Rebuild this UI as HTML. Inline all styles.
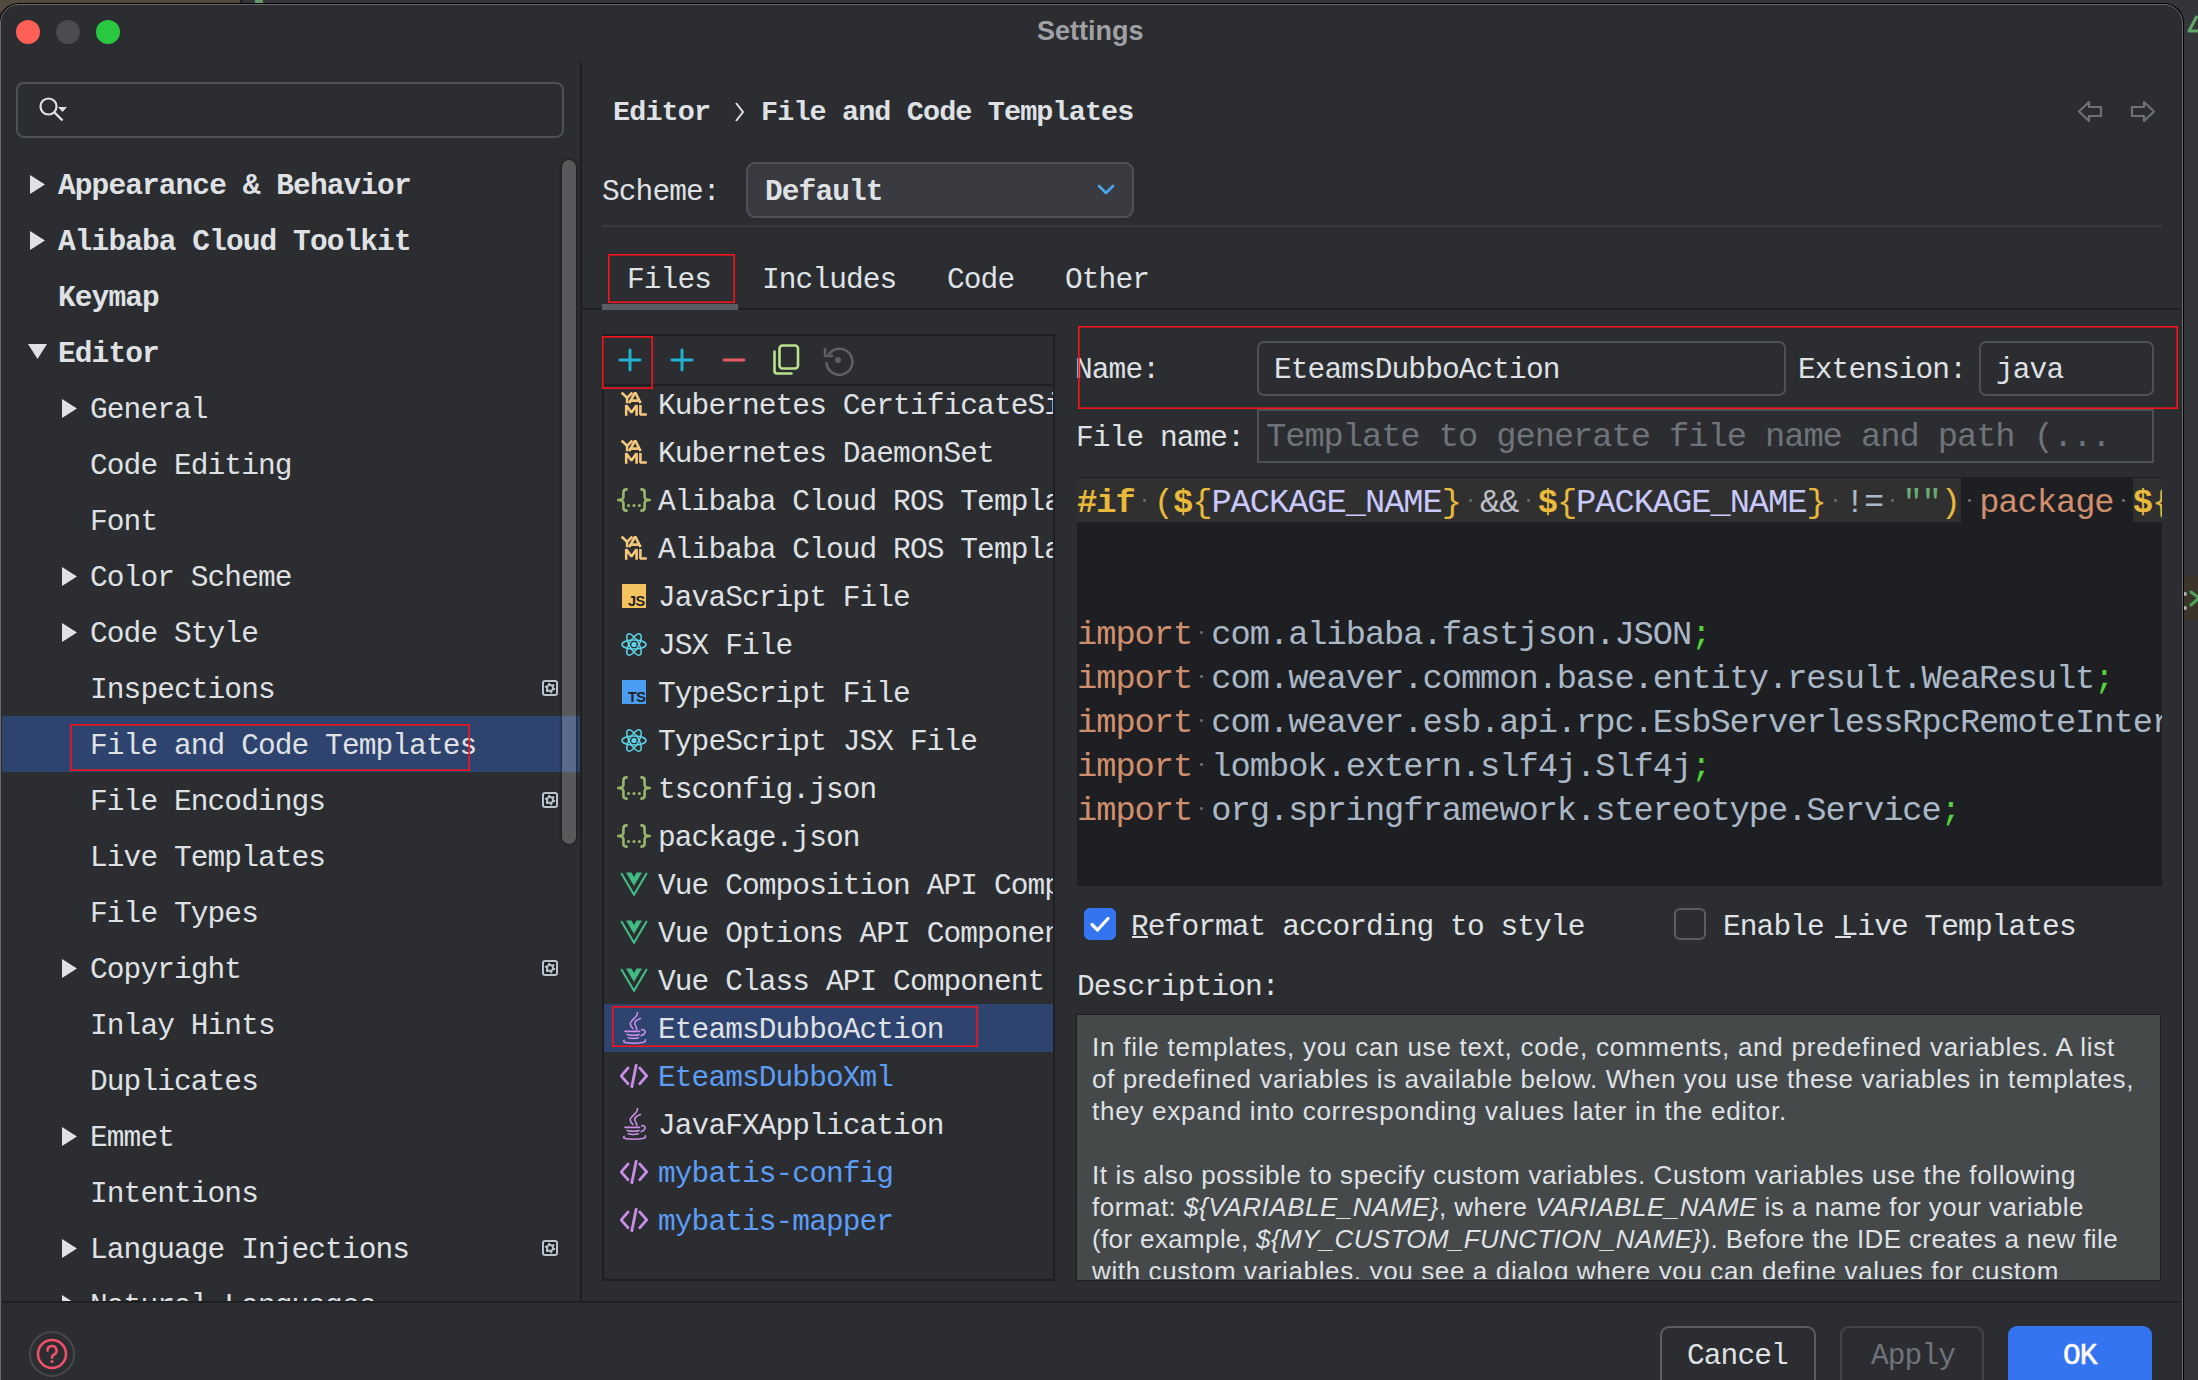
<!DOCTYPE html><html><head><meta charset="utf-8"><style>html,body{margin:0;padding:0;width:2198px;height:1380px;overflow:hidden;background:#303134}</style></head><body><div style="position:absolute;left:0px;top:0px;width:2198px;height:1380px;background:#343538"></div>
<div style="position:absolute;left:0px;top:0px;width:240px;height:12px;background:#524a3e"></div>
<div style="position:absolute;left:240px;top:0px;width:2px;height:4px;background:#1e1f22"></div>
<div style="position:absolute;left:255px;top:0px;width:8px;height:4px;background:#5f9b6a"></div>
<svg style="position:absolute;left:2186px;top:14px;" width="14" height="22" viewBox="0 0 14 22"><path d="M11 2 L3 17 H14" fill="none" stroke="#5fa86a" stroke-width="3" stroke-linejoin="round"/></svg>
<div style="position:absolute;left:2183px;top:576px;width:15px;height:44px;background:#3b3429"></div>
<div style="position:absolute;left:2183px;top:592px;width:4px;height:4px;background:#b0b0b0;border-radius:2px"></div>
<div style="position:absolute;left:2183px;top:606px;width:4px;height:4px;background:#b0b0b0;border-radius:2px"></div>
<svg style="position:absolute;left:2189px;top:588px;" width="10" height="22" viewBox="0 0 10 22"><path d="M2 4 L10 10 L2 17" fill="none" stroke="#4fa45a" stroke-width="3" stroke-linecap="round"/></svg>
<div style="position:absolute;left:-1px;top:3px;width:2185px;height:1420px;background:#000;border-radius:20px 20px 0 0"></div>
<div style="position:absolute;left:0px;top:4px;width:2183px;height:1420px;background:#2b2d30;border:1.5px solid #6a6b6e;border-radius:19px 19px 0 0;box-sizing:border-box;"></div>
<div style="position:absolute;left:16px;top:20px;width:24px;height:24px;background:#fe5f57;border-radius:50%"></div>
<div style="position:absolute;left:56px;top:20px;width:24px;height:24px;background:#4b4c4f;border-radius:50%"></div>
<div style="position:absolute;left:96px;top:20px;width:24px;height:24px;background:#28c840;border-radius:50%"></div>
<div style="position:absolute;left:1037px;top:16px;font-family:'Liberation Sans', sans-serif;font-size:27px;line-height:normal;color:#a0a1a5;font-weight:bold;white-space:pre;">Settings</div>
<div style="position:absolute;left:16px;top:82px;width:548px;height:56px;border:2px solid #4e5157;border-radius:8px;box-sizing:border-box"></div>
<svg style="position:absolute;left:36px;top:94px;" width="36" height="30" viewBox="0 0 36 30"><circle cx="12.5" cy="12.5" r="8" fill="none" stroke="#dfe1e5" stroke-width="2.2"/><line x1="18.5" y1="18.5" x2="26.5" y2="26.5" stroke="#dfe1e5" stroke-width="2.4"/><path d="M22 13 L31 13 L26.5 18 Z" fill="#dfe1e5"/></svg>
<div style="position:absolute;left:0;top:150px;width:580px;height:1152px;overflow:hidden">
<div style="position:absolute;left:2px;top:566px;width:561px;height:56px;background:#2e436e"></div>
<div style="position:absolute;left:563px;top:566px;width:17px;height:56px;background:#2e436e"></div>
<svg style="position:absolute;left:30px;top:25px;" width="16" height="19" viewBox="0 0 16 19"><path d="M0 0 L15 9.5 L0 19 Z" fill="#dfe1e5"/></svg>
<div style="position:absolute;left:58px;top:19px;font-family:'Liberation Mono', monospace;font-size:29.51px;line-height:normal;color:#dfe1e5;font-weight:bold;white-space:pre;letter-spacing:-0.909px;">Appearance &amp; Behavior</div>
<svg style="position:absolute;left:30px;top:81px;" width="16" height="19" viewBox="0 0 16 19"><path d="M0 0 L15 9.5 L0 19 Z" fill="#dfe1e5"/></svg>
<div style="position:absolute;left:58px;top:75px;font-family:'Liberation Mono', monospace;font-size:29.51px;line-height:normal;color:#dfe1e5;font-weight:bold;white-space:pre;letter-spacing:-0.909px;">Alibaba Cloud Toolkit</div>
<div style="position:absolute;left:58px;top:131px;font-family:'Liberation Mono', monospace;font-size:29.51px;line-height:normal;color:#dfe1e5;font-weight:bold;white-space:pre;letter-spacing:-0.909px;">Keymap</div>
<svg style="position:absolute;left:28px;top:194px;" width="19" height="16" viewBox="0 0 19 16"><path d="M0 0 L19 0 L9.5 15 Z" fill="#dfe1e5"/></svg>
<div style="position:absolute;left:58px;top:187px;font-family:'Liberation Mono', monospace;font-size:29.51px;line-height:normal;color:#dfe1e5;font-weight:bold;white-space:pre;letter-spacing:-0.909px;">Editor</div>
<svg style="position:absolute;left:62px;top:249px;" width="16" height="19" viewBox="0 0 16 19"><path d="M0 0 L15 9.5 L0 19 Z" fill="#dfe1e5"/></svg>
<div style="position:absolute;left:90px;top:243px;font-family:'Liberation Mono', monospace;font-size:29.51px;line-height:normal;color:#dfe1e5;font-weight:normal;white-space:pre;letter-spacing:-0.909px;">General</div>
<div style="position:absolute;left:90px;top:299px;font-family:'Liberation Mono', monospace;font-size:29.51px;line-height:normal;color:#dfe1e5;font-weight:normal;white-space:pre;letter-spacing:-0.909px;">Code Editing</div>
<div style="position:absolute;left:90px;top:355px;font-family:'Liberation Mono', monospace;font-size:29.51px;line-height:normal;color:#dfe1e5;font-weight:normal;white-space:pre;letter-spacing:-0.909px;">Font</div>
<svg style="position:absolute;left:62px;top:417px;" width="16" height="19" viewBox="0 0 16 19"><path d="M0 0 L15 9.5 L0 19 Z" fill="#dfe1e5"/></svg>
<div style="position:absolute;left:90px;top:411px;font-family:'Liberation Mono', monospace;font-size:29.51px;line-height:normal;color:#dfe1e5;font-weight:normal;white-space:pre;letter-spacing:-0.909px;">Color Scheme</div>
<svg style="position:absolute;left:62px;top:473px;" width="16" height="19" viewBox="0 0 16 19"><path d="M0 0 L15 9.5 L0 19 Z" fill="#dfe1e5"/></svg>
<div style="position:absolute;left:90px;top:467px;font-family:'Liberation Mono', monospace;font-size:29.51px;line-height:normal;color:#dfe1e5;font-weight:normal;white-space:pre;letter-spacing:-0.909px;">Code Style</div>
<div style="position:absolute;left:90px;top:523px;font-family:'Liberation Mono', monospace;font-size:29.51px;line-height:normal;color:#dfe1e5;font-weight:normal;white-space:pre;letter-spacing:-0.909px;">Inspections</div>
<svg style="position:absolute;left:541px;top:529px;" width="18" height="18" viewBox="0 0 18 18"><rect x="2" y="2" width="14" height="14" rx="2" fill="#1e1f22" stroke="#b9c4cc" stroke-width="2"/><circle cx="9" cy="9" r="3" fill="none" stroke="#b9c4cc" stroke-width="2"/><circle cx="9" cy="9" r="4.4" fill="none" stroke="#b9c4cc" stroke-width="1.8" stroke-dasharray="1.9 2.7"/></svg>
<div style="position:absolute;left:90px;top:579px;font-family:'Liberation Mono', monospace;font-size:29.51px;line-height:normal;color:#dfe1e5;font-weight:normal;white-space:pre;letter-spacing:-0.909px;">File and Code Templates</div>
<div style="position:absolute;left:90px;top:635px;font-family:'Liberation Mono', monospace;font-size:29.51px;line-height:normal;color:#dfe1e5;font-weight:normal;white-space:pre;letter-spacing:-0.909px;">File Encodings</div>
<svg style="position:absolute;left:541px;top:641px;" width="18" height="18" viewBox="0 0 18 18"><rect x="2" y="2" width="14" height="14" rx="2" fill="#1e1f22" stroke="#b9c4cc" stroke-width="2"/><circle cx="9" cy="9" r="3" fill="none" stroke="#b9c4cc" stroke-width="2"/><circle cx="9" cy="9" r="4.4" fill="none" stroke="#b9c4cc" stroke-width="1.8" stroke-dasharray="1.9 2.7"/></svg>
<div style="position:absolute;left:90px;top:691px;font-family:'Liberation Mono', monospace;font-size:29.51px;line-height:normal;color:#dfe1e5;font-weight:normal;white-space:pre;letter-spacing:-0.909px;">Live Templates</div>
<div style="position:absolute;left:90px;top:747px;font-family:'Liberation Mono', monospace;font-size:29.51px;line-height:normal;color:#dfe1e5;font-weight:normal;white-space:pre;letter-spacing:-0.909px;">File Types</div>
<svg style="position:absolute;left:62px;top:809px;" width="16" height="19" viewBox="0 0 16 19"><path d="M0 0 L15 9.5 L0 19 Z" fill="#dfe1e5"/></svg>
<div style="position:absolute;left:90px;top:803px;font-family:'Liberation Mono', monospace;font-size:29.51px;line-height:normal;color:#dfe1e5;font-weight:normal;white-space:pre;letter-spacing:-0.909px;">Copyright</div>
<svg style="position:absolute;left:541px;top:809px;" width="18" height="18" viewBox="0 0 18 18"><rect x="2" y="2" width="14" height="14" rx="2" fill="#1e1f22" stroke="#b9c4cc" stroke-width="2"/><circle cx="9" cy="9" r="3" fill="none" stroke="#b9c4cc" stroke-width="2"/><circle cx="9" cy="9" r="4.4" fill="none" stroke="#b9c4cc" stroke-width="1.8" stroke-dasharray="1.9 2.7"/></svg>
<div style="position:absolute;left:90px;top:859px;font-family:'Liberation Mono', monospace;font-size:29.51px;line-height:normal;color:#dfe1e5;font-weight:normal;white-space:pre;letter-spacing:-0.909px;">Inlay Hints</div>
<div style="position:absolute;left:90px;top:915px;font-family:'Liberation Mono', monospace;font-size:29.51px;line-height:normal;color:#dfe1e5;font-weight:normal;white-space:pre;letter-spacing:-0.909px;">Duplicates</div>
<svg style="position:absolute;left:62px;top:977px;" width="16" height="19" viewBox="0 0 16 19"><path d="M0 0 L15 9.5 L0 19 Z" fill="#dfe1e5"/></svg>
<div style="position:absolute;left:90px;top:971px;font-family:'Liberation Mono', monospace;font-size:29.51px;line-height:normal;color:#dfe1e5;font-weight:normal;white-space:pre;letter-spacing:-0.909px;">Emmet</div>
<div style="position:absolute;left:90px;top:1027px;font-family:'Liberation Mono', monospace;font-size:29.51px;line-height:normal;color:#dfe1e5;font-weight:normal;white-space:pre;letter-spacing:-0.909px;">Intentions</div>
<svg style="position:absolute;left:62px;top:1089px;" width="16" height="19" viewBox="0 0 16 19"><path d="M0 0 L15 9.5 L0 19 Z" fill="#dfe1e5"/></svg>
<div style="position:absolute;left:90px;top:1083px;font-family:'Liberation Mono', monospace;font-size:29.51px;line-height:normal;color:#dfe1e5;font-weight:normal;white-space:pre;letter-spacing:-0.909px;">Language Injections</div>
<svg style="position:absolute;left:541px;top:1089px;" width="18" height="18" viewBox="0 0 18 18"><rect x="2" y="2" width="14" height="14" rx="2" fill="#1e1f22" stroke="#b9c4cc" stroke-width="2"/><circle cx="9" cy="9" r="3" fill="none" stroke="#b9c4cc" stroke-width="2"/><circle cx="9" cy="9" r="4.4" fill="none" stroke="#b9c4cc" stroke-width="1.8" stroke-dasharray="1.9 2.7"/></svg>
<svg style="position:absolute;left:62px;top:1145px;" width="16" height="19" viewBox="0 0 16 19"><path d="M0 0 L15 9.5 L0 19 Z" fill="#dfe1e5"/></svg>
<div style="position:absolute;left:90px;top:1139px;font-family:'Liberation Mono', monospace;font-size:29.51px;line-height:normal;color:#dfe1e5;font-weight:normal;white-space:pre;letter-spacing:-0.909px;">Natural Languages</div>
<div style="position:absolute;left:562px;top:10px;width:14px;height:684px;background:rgba(255,255,255,0.21);border-radius:7px;box-shadow:0 0 2px 1px rgba(20,20,22,0.6)"></div>
</div>
<svg style="position:absolute;left:70px;top:724px" width="400" height="47"><rect x="0.8" y="0.8" width="398.4" height="45.4" fill="none" stroke="#f5141c" stroke-width="1.6"/></svg>
<div style="position:absolute;left:580px;top:62px;width:2px;height:1240px;background:#1e1f22"></div>
<div style="position:absolute;left:2px;top:1301px;width:2178px;height:2px;background:#1e1f22"></div>
<svg style="position:absolute;left:28px;top:1330px;" width="48" height="48" viewBox="0 0 48 48"><circle cx="24" cy="24" r="22" fill="none" stroke="#45474b" stroke-width="2"/><circle cx="24" cy="24" r="14" fill="none" stroke="#f2506d" stroke-width="2.6"/><path d="M19.5 20.5 a4.5 4.5 0 1 1 6.5 4 c-1.5 .8 -2 1.6 -2 3.2" fill="none" stroke="#f2506d" stroke-width="2.6" stroke-linecap="round"/><circle cx="24" cy="31.5" r="1.6" fill="#f2506d"/></svg>
<div style="position:absolute;left:613px;top:96px;font-family:'Liberation Mono', monospace;font-size:28.46px;line-height:normal;color:#dfe1e5;font-weight:bold;white-space:pre;letter-spacing:-0.879px;">Editor</div>
<svg style="position:absolute;left:733px;top:101px;" width="14" height="22" viewBox="0 0 14 22"><path d="M3 2 L10 11 L3 20" fill="none" stroke="#dfe1e5" stroke-width="2"/></svg>
<div style="position:absolute;left:761px;top:96px;font-family:'Liberation Mono', monospace;font-size:28.46px;line-height:normal;color:#dfe1e5;font-weight:bold;white-space:pre;letter-spacing:-0.879px;">File and Code Templates</div>
<svg style="position:absolute;left:2076px;top:99px;" width="30" height="26" viewBox="0 0 30 26"><path d="M3 12.5 L13 3 L13 8 L25 8 L25 17 L13 17 L13 22 Z" fill="none" stroke="#6e7175" stroke-width="2.2" stroke-linejoin="round"/></svg>
<svg style="position:absolute;left:2127px;top:99px;" width="30" height="26" viewBox="0 0 30 26"><path d="M27 12.5 L17 3 L17 8 L5 8 L5 17 L17 17 L17 22 Z" fill="none" stroke="#6e7175" stroke-width="2.2" stroke-linejoin="round"/></svg>
<div style="position:absolute;left:602px;top:175px;font-family:'Liberation Mono', monospace;font-size:29.51px;line-height:normal;color:#dfe1e5;font-weight:normal;white-space:pre;letter-spacing:-0.909px;">Scheme:</div>
<div style="position:absolute;left:746px;top:162px;width:388px;height:56px;background:#393b40;border:2px solid #4e5157;border-radius:9px;box-sizing:border-box"></div>
<div style="position:absolute;left:765px;top:175px;font-family:'Liberation Mono', monospace;font-size:29.51px;line-height:normal;color:#dfe1e5;font-weight:bold;white-space:pre;letter-spacing:-0.909px;">Default</div>
<svg style="position:absolute;left:1096px;top:182px;" width="20" height="16" viewBox="0 0 20 16"><path d="M3 4 L10 11 L17 4" fill="none" stroke="#4ca6e8" stroke-width="2.6" stroke-linecap="round" stroke-linejoin="round"/></svg>
<div style="position:absolute;left:602px;top:225px;width:1560px;height:2px;background:#393b40"></div>
<div style="position:absolute;left:627px;top:263px;font-family:'Liberation Mono', monospace;font-size:29.51px;line-height:normal;color:#dfe1e5;font-weight:normal;white-space:pre;letter-spacing:-0.909px;">Files</div>
<div style="position:absolute;left:762px;top:263px;font-family:'Liberation Mono', monospace;font-size:29.51px;line-height:normal;color:#dfe1e5;font-weight:normal;white-space:pre;letter-spacing:-0.909px;">Includes</div>
<div style="position:absolute;left:947px;top:263px;font-family:'Liberation Mono', monospace;font-size:29.51px;line-height:normal;color:#dfe1e5;font-weight:normal;white-space:pre;letter-spacing:-0.909px;">Code</div>
<div style="position:absolute;left:1065px;top:263px;font-family:'Liberation Mono', monospace;font-size:29.51px;line-height:normal;color:#dfe1e5;font-weight:normal;white-space:pre;letter-spacing:-0.909px;">Other</div>
<div style="position:absolute;left:582px;top:308px;width:1598px;height:2px;background:#1e1f22"></div>
<div style="position:absolute;left:602px;top:304px;width:136px;height:6px;background:#5a5d63"></div>
<svg style="position:absolute;left:608px;top:254px" width="127" height="49"><rect x="0.8" y="0.8" width="125.4" height="47.4" fill="none" stroke="#f5141c" stroke-width="1.6"/></svg>
<div style="position:absolute;left:602px;top:334px;width:453px;height:947px;border:2px solid #1e1f22;box-sizing:border-box"></div>
<div style="position:absolute;left:604px;top:384px;width:449px;height:2px;background:#1e1f22"></div>
<svg style="position:absolute;left:618px;top:348px;" width="24" height="24" viewBox="0 0 24 24"><path d="M12 2 V22 M2 12 H22" stroke="#1fb4d2" stroke-width="2.9" stroke-linecap="round"/></svg>
<svg style="position:absolute;left:670px;top:348px;" width="24" height="24" viewBox="0 0 24 24"><path d="M12 2 V22 M2 12 H22" stroke="#1fb4d2" stroke-width="2.9" stroke-linecap="round"/></svg>
<svg style="position:absolute;left:722px;top:348px;" width="24" height="24" viewBox="0 0 24 24"><path d="M2 12 H22" stroke="#e65a62" stroke-width="2.8" stroke-linecap="round"/></svg>
<svg style="position:absolute;left:770px;top:342px;" width="32" height="36" viewBox="0 0 32 36"><rect x="9.5" y="3.5" width="18.5" height="23" rx="3" fill="none" stroke="#b9e28a" stroke-width="2.6"/><path d="M4.5 9.5 V29 Q4.5 31.5 7 31.5 H21.5" fill="none" stroke="#b9e28a" stroke-width="2.6" stroke-linecap="round"/></svg>
<svg style="position:absolute;left:822px;top:344px;" width="32" height="32" viewBox="0 0 32 32"><path d="M7 10 A13 13 0 1 1 4.5 19" fill="none" stroke="#5e6064" stroke-width="2.6" stroke-linecap="round"/><path d="M3 5 V12 H10" fill="none" stroke="#5e6064" stroke-width="2.6" stroke-linecap="round" stroke-linejoin="round"/><circle cx="16" cy="16" r="3" fill="#5e6064"/></svg>
<svg style="position:absolute;left:602px;top:336px" width="51" height="53"><rect x="0.8" y="0.8" width="49.4" height="51.4" fill="none" stroke="#f5141c" stroke-width="1.6"/></svg>
<div style="position:absolute;left:604px;top:386px;width:449px;height:893px;overflow:hidden">
<div style="position:absolute;left:0px;top:618px;width:449px;height:48px;background:#2e436e"></div>
<svg style="position:absolute;left:16px;top:6px;" width="28" height="26" viewBox="0 0 28 26"><g fill="none" stroke="#f5c77c" stroke-width="2.6" stroke-linejoin="bevel"><path d="M1.6 0.6 L7.1 5.8 L12.3 0.6 M7.1 5.8 V11.2"/><path d="M9.2 11.2 L15.2 0.4 L20.6 11.2 M11.4 8.6 H18.8"/><path d="M6.2 23.8 V13.2 L11.4 20.4 L16.6 13.2 V23.8"/><path d="M20.4 13 V22.5 H26.8"/></g></svg>
<div style="position:absolute;left:54px;top:3px;font-family:'Liberation Mono', monospace;font-size:29.51px;line-height:normal;color:#dfe1e5;font-weight:normal;white-space:pre;letter-spacing:-0.909px;">Kubernetes CertificateSigningRequest</div>
<svg style="position:absolute;left:16px;top:54px;" width="28" height="26" viewBox="0 0 28 26"><g fill="none" stroke="#f5c77c" stroke-width="2.6" stroke-linejoin="bevel"><path d="M1.6 0.6 L7.1 5.8 L12.3 0.6 M7.1 5.8 V11.2"/><path d="M9.2 11.2 L15.2 0.4 L20.6 11.2 M11.4 8.6 H18.8"/><path d="M6.2 23.8 V13.2 L11.4 20.4 L16.6 13.2 V23.8"/><path d="M20.4 13 V22.5 H26.8"/></g></svg>
<div style="position:absolute;left:54px;top:51px;font-family:'Liberation Mono', monospace;font-size:29.51px;line-height:normal;color:#dfe1e5;font-weight:normal;white-space:pre;letter-spacing:-0.909px;">Kubernetes DaemonSet</div>
<svg style="position:absolute;left:13px;top:102px;" width="34" height="26" viewBox="0 0 34 26"><g fill="none" stroke="#98b56b" stroke-width="2.6" stroke-linejoin="round"><path d="M10.6 1.4 H9.4 Q6.4 1.4 6.4 4.4 V9 Q6.4 12 1.2 12 Q6.4 12 6.4 15 V19.6 Q6.4 22.6 9.4 22.6 H10.6"/><path d="M23.4 1.4 H24.6 Q27.6 1.4 27.6 4.4 V9 Q27.6 12 32.8 12 Q27.6 12 27.6 15 V19.6 Q27.6 22.6 24.6 22.6 H23.4"/></g><circle cx="11.5" cy="17.4" r="1.5" fill="#98b56b"/><circle cx="17" cy="17.4" r="1.5" fill="#98b56b"/><circle cx="22.4" cy="17.4" r="1.5" fill="#98b56b"/></svg>
<div style="position:absolute;left:54px;top:99px;font-family:'Liberation Mono', monospace;font-size:29.51px;line-height:normal;color:#dfe1e5;font-weight:normal;white-space:pre;letter-spacing:-0.909px;">Alibaba Cloud ROS Template</div>
<svg style="position:absolute;left:16px;top:150px;" width="28" height="26" viewBox="0 0 28 26"><g fill="none" stroke="#f5c77c" stroke-width="2.6" stroke-linejoin="bevel"><path d="M1.6 0.6 L7.1 5.8 L12.3 0.6 M7.1 5.8 V11.2"/><path d="M9.2 11.2 L15.2 0.4 L20.6 11.2 M11.4 8.6 H18.8"/><path d="M6.2 23.8 V13.2 L11.4 20.4 L16.6 13.2 V23.8"/><path d="M20.4 13 V22.5 H26.8"/></g></svg>
<div style="position:absolute;left:54px;top:147px;font-family:'Liberation Mono', monospace;font-size:29.51px;line-height:normal;color:#dfe1e5;font-weight:normal;white-space:pre;letter-spacing:-0.909px;">Alibaba Cloud ROS Template</div>
<svg style="position:absolute;left:18px;top:198px;" width="24" height="24" viewBox="0 0 24 24"><rect x="0" y="0" width="24" height="24" fill="#f4c35f"/><text x="6" y="22" font-family="Liberation Sans" font-weight="bold" font-size="14.5" letter-spacing="-0.5" fill="#1f2023">JS</text></svg>
<div style="position:absolute;left:54px;top:195px;font-family:'Liberation Mono', monospace;font-size:29.51px;line-height:normal;color:#dfe1e5;font-weight:normal;white-space:pre;letter-spacing:-0.909px;">JavaScript File</div>
<svg style="position:absolute;left:17px;top:246px;" width="26" height="25" viewBox="0 0 26 25"><g fill="none" stroke="#5fd3e8" stroke-width="1.5"><ellipse cx="13" cy="12.5" rx="12" ry="4.6"/><ellipse cx="13" cy="12.5" rx="12" ry="4.6" transform="rotate(60 13 12.5)"/><ellipse cx="13" cy="12.5" rx="12" ry="4.6" transform="rotate(120 13 12.5)"/></g><circle cx="13" cy="12.5" r="2.6" fill="#5fd3e8"/></svg>
<div style="position:absolute;left:54px;top:243px;font-family:'Liberation Mono', monospace;font-size:29.51px;line-height:normal;color:#dfe1e5;font-weight:normal;white-space:pre;letter-spacing:-0.909px;">JSX File</div>
<svg style="position:absolute;left:18px;top:294px;" width="24" height="24" viewBox="0 0 24 24"><rect x="0" y="0" width="24" height="24" fill="#4a9df2"/><text x="6" y="22" font-family="Liberation Sans" font-weight="bold" font-size="14.5" letter-spacing="-0.5" fill="#1f2023">TS</text></svg>
<div style="position:absolute;left:54px;top:291px;font-family:'Liberation Mono', monospace;font-size:29.51px;line-height:normal;color:#dfe1e5;font-weight:normal;white-space:pre;letter-spacing:-0.909px;">TypeScript File</div>
<svg style="position:absolute;left:17px;top:342px;" width="26" height="25" viewBox="0 0 26 25"><g fill="none" stroke="#5fd3e8" stroke-width="1.5"><ellipse cx="13" cy="12.5" rx="12" ry="4.6"/><ellipse cx="13" cy="12.5" rx="12" ry="4.6" transform="rotate(60 13 12.5)"/><ellipse cx="13" cy="12.5" rx="12" ry="4.6" transform="rotate(120 13 12.5)"/></g><circle cx="13" cy="12.5" r="2.6" fill="#5fd3e8"/></svg>
<div style="position:absolute;left:54px;top:339px;font-family:'Liberation Mono', monospace;font-size:29.51px;line-height:normal;color:#dfe1e5;font-weight:normal;white-space:pre;letter-spacing:-0.909px;">TypeScript JSX File</div>
<svg style="position:absolute;left:13px;top:390px;" width="34" height="26" viewBox="0 0 34 26"><g fill="none" stroke="#98b56b" stroke-width="2.6" stroke-linejoin="round"><path d="M10.6 1.4 H9.4 Q6.4 1.4 6.4 4.4 V9 Q6.4 12 1.2 12 Q6.4 12 6.4 15 V19.6 Q6.4 22.6 9.4 22.6 H10.6"/><path d="M23.4 1.4 H24.6 Q27.6 1.4 27.6 4.4 V9 Q27.6 12 32.8 12 Q27.6 12 27.6 15 V19.6 Q27.6 22.6 24.6 22.6 H23.4"/></g><circle cx="11.5" cy="17.4" r="1.5" fill="#98b56b"/><circle cx="17" cy="17.4" r="1.5" fill="#98b56b"/><circle cx="22.4" cy="17.4" r="1.5" fill="#98b56b"/></svg>
<div style="position:absolute;left:54px;top:387px;font-family:'Liberation Mono', monospace;font-size:29.51px;line-height:normal;color:#dfe1e5;font-weight:normal;white-space:pre;letter-spacing:-0.909px;">tsconfig.json</div>
<svg style="position:absolute;left:13px;top:438px;" width="34" height="26" viewBox="0 0 34 26"><g fill="none" stroke="#98b56b" stroke-width="2.6" stroke-linejoin="round"><path d="M10.6 1.4 H9.4 Q6.4 1.4 6.4 4.4 V9 Q6.4 12 1.2 12 Q6.4 12 6.4 15 V19.6 Q6.4 22.6 9.4 22.6 H10.6"/><path d="M23.4 1.4 H24.6 Q27.6 1.4 27.6 4.4 V9 Q27.6 12 32.8 12 Q27.6 12 27.6 15 V19.6 Q27.6 22.6 24.6 22.6 H23.4"/></g><circle cx="11.5" cy="17.4" r="1.5" fill="#98b56b"/><circle cx="17" cy="17.4" r="1.5" fill="#98b56b"/><circle cx="22.4" cy="17.4" r="1.5" fill="#98b56b"/></svg>
<div style="position:absolute;left:54px;top:435px;font-family:'Liberation Mono', monospace;font-size:29.51px;line-height:normal;color:#dfe1e5;font-weight:normal;white-space:pre;letter-spacing:-0.909px;">package.json</div>
<svg style="position:absolute;left:16px;top:486px;" width="28" height="24" viewBox="0 0 28 24"><path d="M1.2 1 L14 22.8 L26.8 1" fill="none" stroke="#41bf86" stroke-width="2"/><path d="M6 0.4 H11.4 L14 5 L16.6 0.4 H22 L14 14 Z" fill="#41bb84"/></svg>
<div style="position:absolute;left:54px;top:483px;font-family:'Liberation Mono', monospace;font-size:29.51px;line-height:normal;color:#dfe1e5;font-weight:normal;white-space:pre;letter-spacing:-0.909px;">Vue Composition API Component</div>
<svg style="position:absolute;left:16px;top:534px;" width="28" height="24" viewBox="0 0 28 24"><path d="M1.2 1 L14 22.8 L26.8 1" fill="none" stroke="#41bf86" stroke-width="2"/><path d="M6 0.4 H11.4 L14 5 L16.6 0.4 H22 L14 14 Z" fill="#41bb84"/></svg>
<div style="position:absolute;left:54px;top:531px;font-family:'Liberation Mono', monospace;font-size:29.51px;line-height:normal;color:#dfe1e5;font-weight:normal;white-space:pre;letter-spacing:-0.909px;">Vue Options API Component</div>
<svg style="position:absolute;left:16px;top:582px;" width="28" height="24" viewBox="0 0 28 24"><path d="M1.2 1 L14 22.8 L26.8 1" fill="none" stroke="#41bf86" stroke-width="2"/><path d="M6 0.4 H11.4 L14 5 L16.6 0.4 H22 L14 14 Z" fill="#41bb84"/></svg>
<div style="position:absolute;left:54px;top:579px;font-family:'Liberation Mono', monospace;font-size:29.51px;line-height:normal;color:#dfe1e5;font-weight:normal;white-space:pre;letter-spacing:-0.909px;">Vue Class API Component</div>
<svg style="position:absolute;left:17px;top:626px;" width="28" height="33" viewBox="0 0 28 33"><g fill="none" stroke="#c98ee8" stroke-width="1.6" stroke-linecap="round"><path d="M16.4 0.6 C17.4 5 9 8 9.2 11.9 C9.4 14 10.8 15.5 12 16.4"/><path d="M19.4 6.6 C16 8 13.4 10 13.7 11.6 C14 13.4 16.2 15 15.6 17.4"/><path d="M4 19.4 H18.6"/><path d="M20.8 17.6 C25 17.4 25.6 21.4 20.2 23.6"/><path d="M6.2 22.4 Q12 24 18 22.6"/><path d="M7.3 25.8 Q12.5 27.2 17.3 25.8"/><path d="M3 28.4 C0.8 31 8 31.2 13 31.2 C19 31.2 25.6 30.6 24.4 27.8"/></g></svg>
<div style="position:absolute;left:54px;top:627px;font-family:'Liberation Mono', monospace;font-size:29.51px;line-height:normal;color:#dfe1e5;font-weight:normal;white-space:pre;letter-spacing:-0.909px;">EteamsDubboAction</div>
<svg style="position:absolute;left:16px;top:678px;" width="28" height="24" viewBox="0 0 28 24"><g fill="none" stroke="#c98ee8" stroke-width="2.8" stroke-linejoin="miter"><path d="M8.8 3.2 L1.2 11.9 L8.8 20.6"/><path d="M19 3.2 L26.6 11.9 L19 20.6"/><path d="M16.4 0.2 L11.6 23.8"/></g></svg>
<div style="position:absolute;left:54px;top:675px;font-family:'Liberation Mono', monospace;font-size:29.51px;line-height:normal;color:#5c9cf5;font-weight:normal;white-space:pre;letter-spacing:-0.909px;">EteamsDubboXml</div>
<svg style="position:absolute;left:17px;top:722px;" width="28" height="33" viewBox="0 0 28 33"><g fill="none" stroke="#c98ee8" stroke-width="1.6" stroke-linecap="round"><path d="M16.4 0.6 C17.4 5 9 8 9.2 11.9 C9.4 14 10.8 15.5 12 16.4"/><path d="M19.4 6.6 C16 8 13.4 10 13.7 11.6 C14 13.4 16.2 15 15.6 17.4"/><path d="M4 19.4 H18.6"/><path d="M20.8 17.6 C25 17.4 25.6 21.4 20.2 23.6"/><path d="M6.2 22.4 Q12 24 18 22.6"/><path d="M7.3 25.8 Q12.5 27.2 17.3 25.8"/><path d="M3 28.4 C0.8 31 8 31.2 13 31.2 C19 31.2 25.6 30.6 24.4 27.8"/></g></svg>
<div style="position:absolute;left:54px;top:723px;font-family:'Liberation Mono', monospace;font-size:29.51px;line-height:normal;color:#dfe1e5;font-weight:normal;white-space:pre;letter-spacing:-0.909px;">JavaFXApplication</div>
<svg style="position:absolute;left:16px;top:774px;" width="28" height="24" viewBox="0 0 28 24"><g fill="none" stroke="#c98ee8" stroke-width="2.8" stroke-linejoin="miter"><path d="M8.8 3.2 L1.2 11.9 L8.8 20.6"/><path d="M19 3.2 L26.6 11.9 L19 20.6"/><path d="M16.4 0.2 L11.6 23.8"/></g></svg>
<div style="position:absolute;left:54px;top:771px;font-family:'Liberation Mono', monospace;font-size:29.51px;line-height:normal;color:#5c9cf5;font-weight:normal;white-space:pre;letter-spacing:-0.909px;">mybatis-config</div>
<svg style="position:absolute;left:16px;top:822px;" width="28" height="24" viewBox="0 0 28 24"><g fill="none" stroke="#c98ee8" stroke-width="2.8" stroke-linejoin="miter"><path d="M8.8 3.2 L1.2 11.9 L8.8 20.6"/><path d="M19 3.2 L26.6 11.9 L19 20.6"/><path d="M16.4 0.2 L11.6 23.8"/></g></svg>
<div style="position:absolute;left:54px;top:819px;font-family:'Liberation Mono', monospace;font-size:29.51px;line-height:normal;color:#5c9cf5;font-weight:normal;white-space:pre;letter-spacing:-0.909px;">mybatis-mapper</div>
</div>
<svg style="position:absolute;left:612px;top:1006px" width="366" height="41"><rect x="0.8" y="0.8" width="364.4" height="39.4" fill="none" stroke="#f5141c" stroke-width="1.6"/></svg>
<div style="position:absolute;left:1075px;top:353px;font-family:'Liberation Mono', monospace;font-size:29.51px;line-height:normal;color:#dfe1e5;font-weight:normal;white-space:pre;letter-spacing:-0.909px;">Name:</div>
<div style="position:absolute;left:1257px;top:341px;width:529px;height:55px;border:2px solid #4e5157;border-radius:7px;box-sizing:border-box"></div>
<div style="position:absolute;left:1274px;top:353px;font-family:'Liberation Mono', monospace;font-size:29.51px;line-height:normal;color:#dfe1e5;font-weight:normal;white-space:pre;letter-spacing:-0.909px;">EteamsDubboAction</div>
<div style="position:absolute;left:1798px;top:353px;font-family:'Liberation Mono', monospace;font-size:29.51px;line-height:normal;color:#dfe1e5;font-weight:normal;white-space:pre;letter-spacing:-0.909px;">Extension:</div>
<div style="position:absolute;left:1979px;top:341px;width:175px;height:55px;border:2px solid #4e5157;border-radius:7px;box-sizing:border-box"></div>
<div style="position:absolute;left:1996px;top:353px;font-family:'Liberation Mono', monospace;font-size:29.51px;line-height:normal;color:#dfe1e5;font-weight:normal;white-space:pre;letter-spacing:-0.909px;">java</div>
<div style="position:absolute;left:1076px;top:421px;font-family:'Liberation Mono', monospace;font-size:29.51px;line-height:normal;color:#dfe1e5;font-weight:normal;white-space:pre;letter-spacing:-0.909px;">File name:</div>
<div style="position:absolute;left:1257px;top:409px;width:897px;height:54px;border:2px solid #4e5157;box-sizing:border-box"></div>
<div style="position:absolute;left:1266px;top:418px;font-family:'Liberation Mono', monospace;font-size:33.73px;line-height:normal;color:#6f737a;font-weight:normal;white-space:pre;letter-spacing:-1.041px;">Template to generate file name and path (...</div>
<svg style="position:absolute;left:1078px;top:326px" width="1100" height="83"><rect x="0.8" y="0.8" width="1098.4" height="81.4" fill="none" stroke="#f5141c" stroke-width="1.6"/></svg>
<div style="position:absolute;left:1077px;top:477px;width:1085px;height:409px;background:#1e1f22"></div>
<div style="position:absolute;left:1077px;top:477px;width:1085px;height:409px;overflow:hidden">
<div style="position:absolute;left:0px;top:1px;width:884px;height:44px;background:#303031"></div>
<div style="position:absolute;left:1056px;top:1px;width:30px;height:44px;background:#303031"></div>
<div style="position:absolute;left:0px;top:7px;font-family:'Liberation Mono', monospace;font-size:33.73px;line-height:normal;color:#dfe1e5;font-weight:normal;white-space:pre;letter-spacing:-1.041px;"><span style="color:#e8b93a;font-weight:bold;">#if</span><span style="display:inline-block;width:19.2px;height:5px;vertical-align:9.5px;background:radial-gradient(circle,#6a6d72 1.1px,rgba(0,0,0,0) 1.8px)"></span><span style="color:#e8b93a;">(</span><span style="color:#e8b93a;font-weight:bold;">$</span><span style="color:#e8b93a;">{</span><span style="color:#c8c8fa;">PACKAGE_NAME</span><span style="color:#e8b93a;">}</span><span style="display:inline-block;width:19.2px;height:5px;vertical-align:9.5px;background:radial-gradient(circle,#6a6d72 1.1px,rgba(0,0,0,0) 1.8px)"></span><span style="color:#bcbec4;">&amp;&amp;</span><span style="display:inline-block;width:19.2px;height:5px;vertical-align:9.5px;background:radial-gradient(circle,#6a6d72 1.1px,rgba(0,0,0,0) 1.8px)"></span><span style="color:#e8b93a;font-weight:bold;">$</span><span style="color:#e8b93a;">{</span><span style="color:#c8c8fa;">PACKAGE_NAME</span><span style="color:#e8b93a;">}</span><span style="display:inline-block;width:19.2px;height:5px;vertical-align:9.5px;background:radial-gradient(circle,#6a6d72 1.1px,rgba(0,0,0,0) 1.8px)"></span><span style="color:#a9b7c6;">!=</span><span style="display:inline-block;width:19.2px;height:5px;vertical-align:9.5px;background:radial-gradient(circle,#6a6d72 1.1px,rgba(0,0,0,0) 1.8px)"></span><span style="color:#6aab73;">&quot;&quot;</span><span style="color:#e8b93a;">)</span><span style="display:inline-block;width:19.2px;height:5px;vertical-align:9.5px;background:radial-gradient(circle,#6a6d72 1.1px,rgba(0,0,0,0) 1.8px)"></span><span style="color:#cf8e6d;">package</span><span style="display:inline-block;width:19.2px;height:5px;vertical-align:9.5px;background:radial-gradient(circle,#6a6d72 1.1px,rgba(0,0,0,0) 1.8px)"></span><span style="color:#e8b93a;font-weight:bold;">$</span><span style="color:#e8b93a;">{</span></div>
<div style="position:absolute;left:0px;top:139px;font-family:'Liberation Mono', monospace;font-size:33.73px;line-height:normal;color:#dfe1e5;font-weight:normal;white-space:pre;letter-spacing:-1.041px;"><span style="color:#cf8e6d;">import</span><span style="display:inline-block;width:19.2px;height:5px;vertical-align:9.5px;background:radial-gradient(circle,#6a6d72 1.1px,rgba(0,0,0,0) 1.8px)"></span><span style="color:#a9b7c6;">com.alibaba.fastjson.JSON</span><span style="color:#56d23b;">;</span></div>
<div style="position:absolute;left:0px;top:183px;font-family:'Liberation Mono', monospace;font-size:33.73px;line-height:normal;color:#dfe1e5;font-weight:normal;white-space:pre;letter-spacing:-1.041px;"><span style="color:#cf8e6d;">import</span><span style="display:inline-block;width:19.2px;height:5px;vertical-align:9.5px;background:radial-gradient(circle,#6a6d72 1.1px,rgba(0,0,0,0) 1.8px)"></span><span style="color:#a9b7c6;">com.weaver.common.base.entity.result.WeaResult</span><span style="color:#56d23b;">;</span></div>
<div style="position:absolute;left:0px;top:227px;font-family:'Liberation Mono', monospace;font-size:33.73px;line-height:normal;color:#dfe1e5;font-weight:normal;white-space:pre;letter-spacing:-1.041px;"><span style="color:#cf8e6d;">import</span><span style="display:inline-block;width:19.2px;height:5px;vertical-align:9.5px;background:radial-gradient(circle,#6a6d72 1.1px,rgba(0,0,0,0) 1.8px)"></span><span style="color:#a9b7c6;">com.weaver.esb.api.rpc.EsbServerlessRpcRemoteInterface</span><span style="color:#56d23b;">;</span></div>
<div style="position:absolute;left:0px;top:271px;font-family:'Liberation Mono', monospace;font-size:33.73px;line-height:normal;color:#dfe1e5;font-weight:normal;white-space:pre;letter-spacing:-1.041px;"><span style="color:#cf8e6d;">import</span><span style="display:inline-block;width:19.2px;height:5px;vertical-align:9.5px;background:radial-gradient(circle,#6a6d72 1.1px,rgba(0,0,0,0) 1.8px)"></span><span style="color:#a9b7c6;">lombok.extern.slf4j.Slf4j</span><span style="color:#56d23b;">;</span></div>
<div style="position:absolute;left:0px;top:315px;font-family:'Liberation Mono', monospace;font-size:33.73px;line-height:normal;color:#dfe1e5;font-weight:normal;white-space:pre;letter-spacing:-1.041px;"><span style="color:#cf8e6d;">import</span><span style="display:inline-block;width:19.2px;height:5px;vertical-align:9.5px;background:radial-gradient(circle,#6a6d72 1.1px,rgba(0,0,0,0) 1.8px)"></span><span style="color:#a9b7c6;">org.springframework.stereotype.Service</span><span style="color:#56d23b;">;</span></div>
</div>
<div style="position:absolute;left:1084px;top:908px;width:32px;height:32px;background:#3574f0;border-radius:6px"></div>
<svg style="position:absolute;left:1084px;top:908px;" width="32" height="32" viewBox="0 0 32 32"><path d="M8 16.5 L13.5 22 L24 10.5" fill="none" stroke="#fff" stroke-width="3.2" stroke-linecap="round" stroke-linejoin="round"/></svg>
<div style="position:absolute;left:1131px;top:910px;font-family:'Liberation Mono', monospace;font-size:29.51px;line-height:normal;color:#dfe1e5;font-weight:normal;white-space:pre;letter-spacing:-0.909px;">Reformat according to style</div>
<div style="position:absolute;left:1132px;top:936px;width:16px;height:2px;background:#dfe1e5"></div>
<div style="position:absolute;left:1674px;top:908px;width:32px;height:32px;border:2px solid #5a5d63;border-radius:6px;box-sizing:border-box"></div>
<div style="position:absolute;left:1723px;top:910px;font-family:'Liberation Mono', monospace;font-size:29.51px;line-height:normal;color:#dfe1e5;font-weight:normal;white-space:pre;letter-spacing:-0.909px;">Enable Live Templates</div>
<div style="position:absolute;left:1835px;top:936px;width:16px;height:2px;background:#dfe1e5"></div>
<div style="position:absolute;left:1077px;top:970px;font-family:'Liberation Mono', monospace;font-size:29.51px;line-height:normal;color:#dfe1e5;font-weight:normal;white-space:pre;letter-spacing:-0.909px;">Description:</div>
<div style="position:absolute;left:1076px;top:1014px;width:1085px;height:267px;background:#45494a;border:1px solid #1e1f22;box-sizing:border-box"></div>
<div style="position:absolute;left:1079px;top:1016px;width:1081px;height:1263px;max-height:263px;overflow:hidden">
<div style="position:absolute;left:13px;top:16px;font-family:'Liberation Sans', sans-serif;font-size:26px;line-height:normal;color:#dfe1e5;font-weight:normal;white-space:pre;letter-spacing:0.762px">In file templates, you can use text, code, comments, and predefined variables. A list</div>
<div style="position:absolute;left:13px;top:48px;font-family:'Liberation Sans', sans-serif;font-size:26px;line-height:normal;color:#dfe1e5;font-weight:normal;white-space:pre;letter-spacing:0.605px">of predefined variables is available below. When you use these variables in templates,</div>
<div style="position:absolute;left:13px;top:80px;font-family:'Liberation Sans', sans-serif;font-size:26px;line-height:normal;color:#dfe1e5;font-weight:normal;white-space:pre;letter-spacing:0.743px">they expand into corresponding values later in the editor.</div>
<div style="position:absolute;left:13px;top:144px;font-family:'Liberation Sans', sans-serif;font-size:26px;line-height:normal;color:#dfe1e5;font-weight:normal;white-space:pre;letter-spacing:0.608px">It is also possible to specify custom variables. Custom variables use the following</div>
<div style="position:absolute;left:13px;top:176px;font-family:'Liberation Sans', sans-serif;font-size:26px;line-height:normal;color:#dfe1e5;font-weight:normal;white-space:pre;letter-spacing:0.484px">format: <i>${VARIABLE_NAME}</i>, where <i>VARIABLE_NAME</i> is a name for your variable</div>
<div style="position:absolute;left:13px;top:208px;font-family:'Liberation Sans', sans-serif;font-size:26px;line-height:normal;color:#dfe1e5;font-weight:normal;white-space:pre;letter-spacing:0.368px">(for example, <i>${MY_CUSTOM_FUNCTION_NAME}</i>). Before the IDE creates a new file</div>
<div style="position:absolute;left:13px;top:240px;font-family:'Liberation Sans', sans-serif;font-size:26px;line-height:normal;color:#dfe1e5;font-weight:normal;white-space:pre;letter-spacing:0.632px">with custom variables, you see a dialog where you can define values for custom</div>
</div>
<div style="position:absolute;left:1660px;top:1326px;width:156px;height:80px;border:2px solid #5a5d63;border-radius:9px;box-sizing:border-box"></div>
<div style="position:absolute;left:1687px;top:1339px;font-family:'Liberation Mono', monospace;font-size:29.51px;line-height:normal;color:#dfe1e5;font-weight:normal;white-space:pre;letter-spacing:-0.909px;">Cancel</div>
<div style="position:absolute;left:1840px;top:1326px;width:144px;height:80px;border:2px solid #43454a;border-radius:9px;box-sizing:border-box"></div>
<div style="position:absolute;left:1871px;top:1339px;font-family:'Liberation Mono', monospace;font-size:29.51px;line-height:normal;color:#6f737a;font-weight:normal;white-space:pre;letter-spacing:-0.909px;">Apply</div>
<div style="position:absolute;left:2008px;top:1326px;width:144px;height:80px;background:#3574f0;border-radius:9px"></div>
<div style="position:absolute;left:2063px;top:1339px;font-family:'Liberation Mono', monospace;font-size:29.51px;line-height:normal;color:#ffffff;font-weight:normal;white-space:pre;letter-spacing:-0.909px;-webkit-text-stroke:0.5px #fff;">OK</div></body></html>
